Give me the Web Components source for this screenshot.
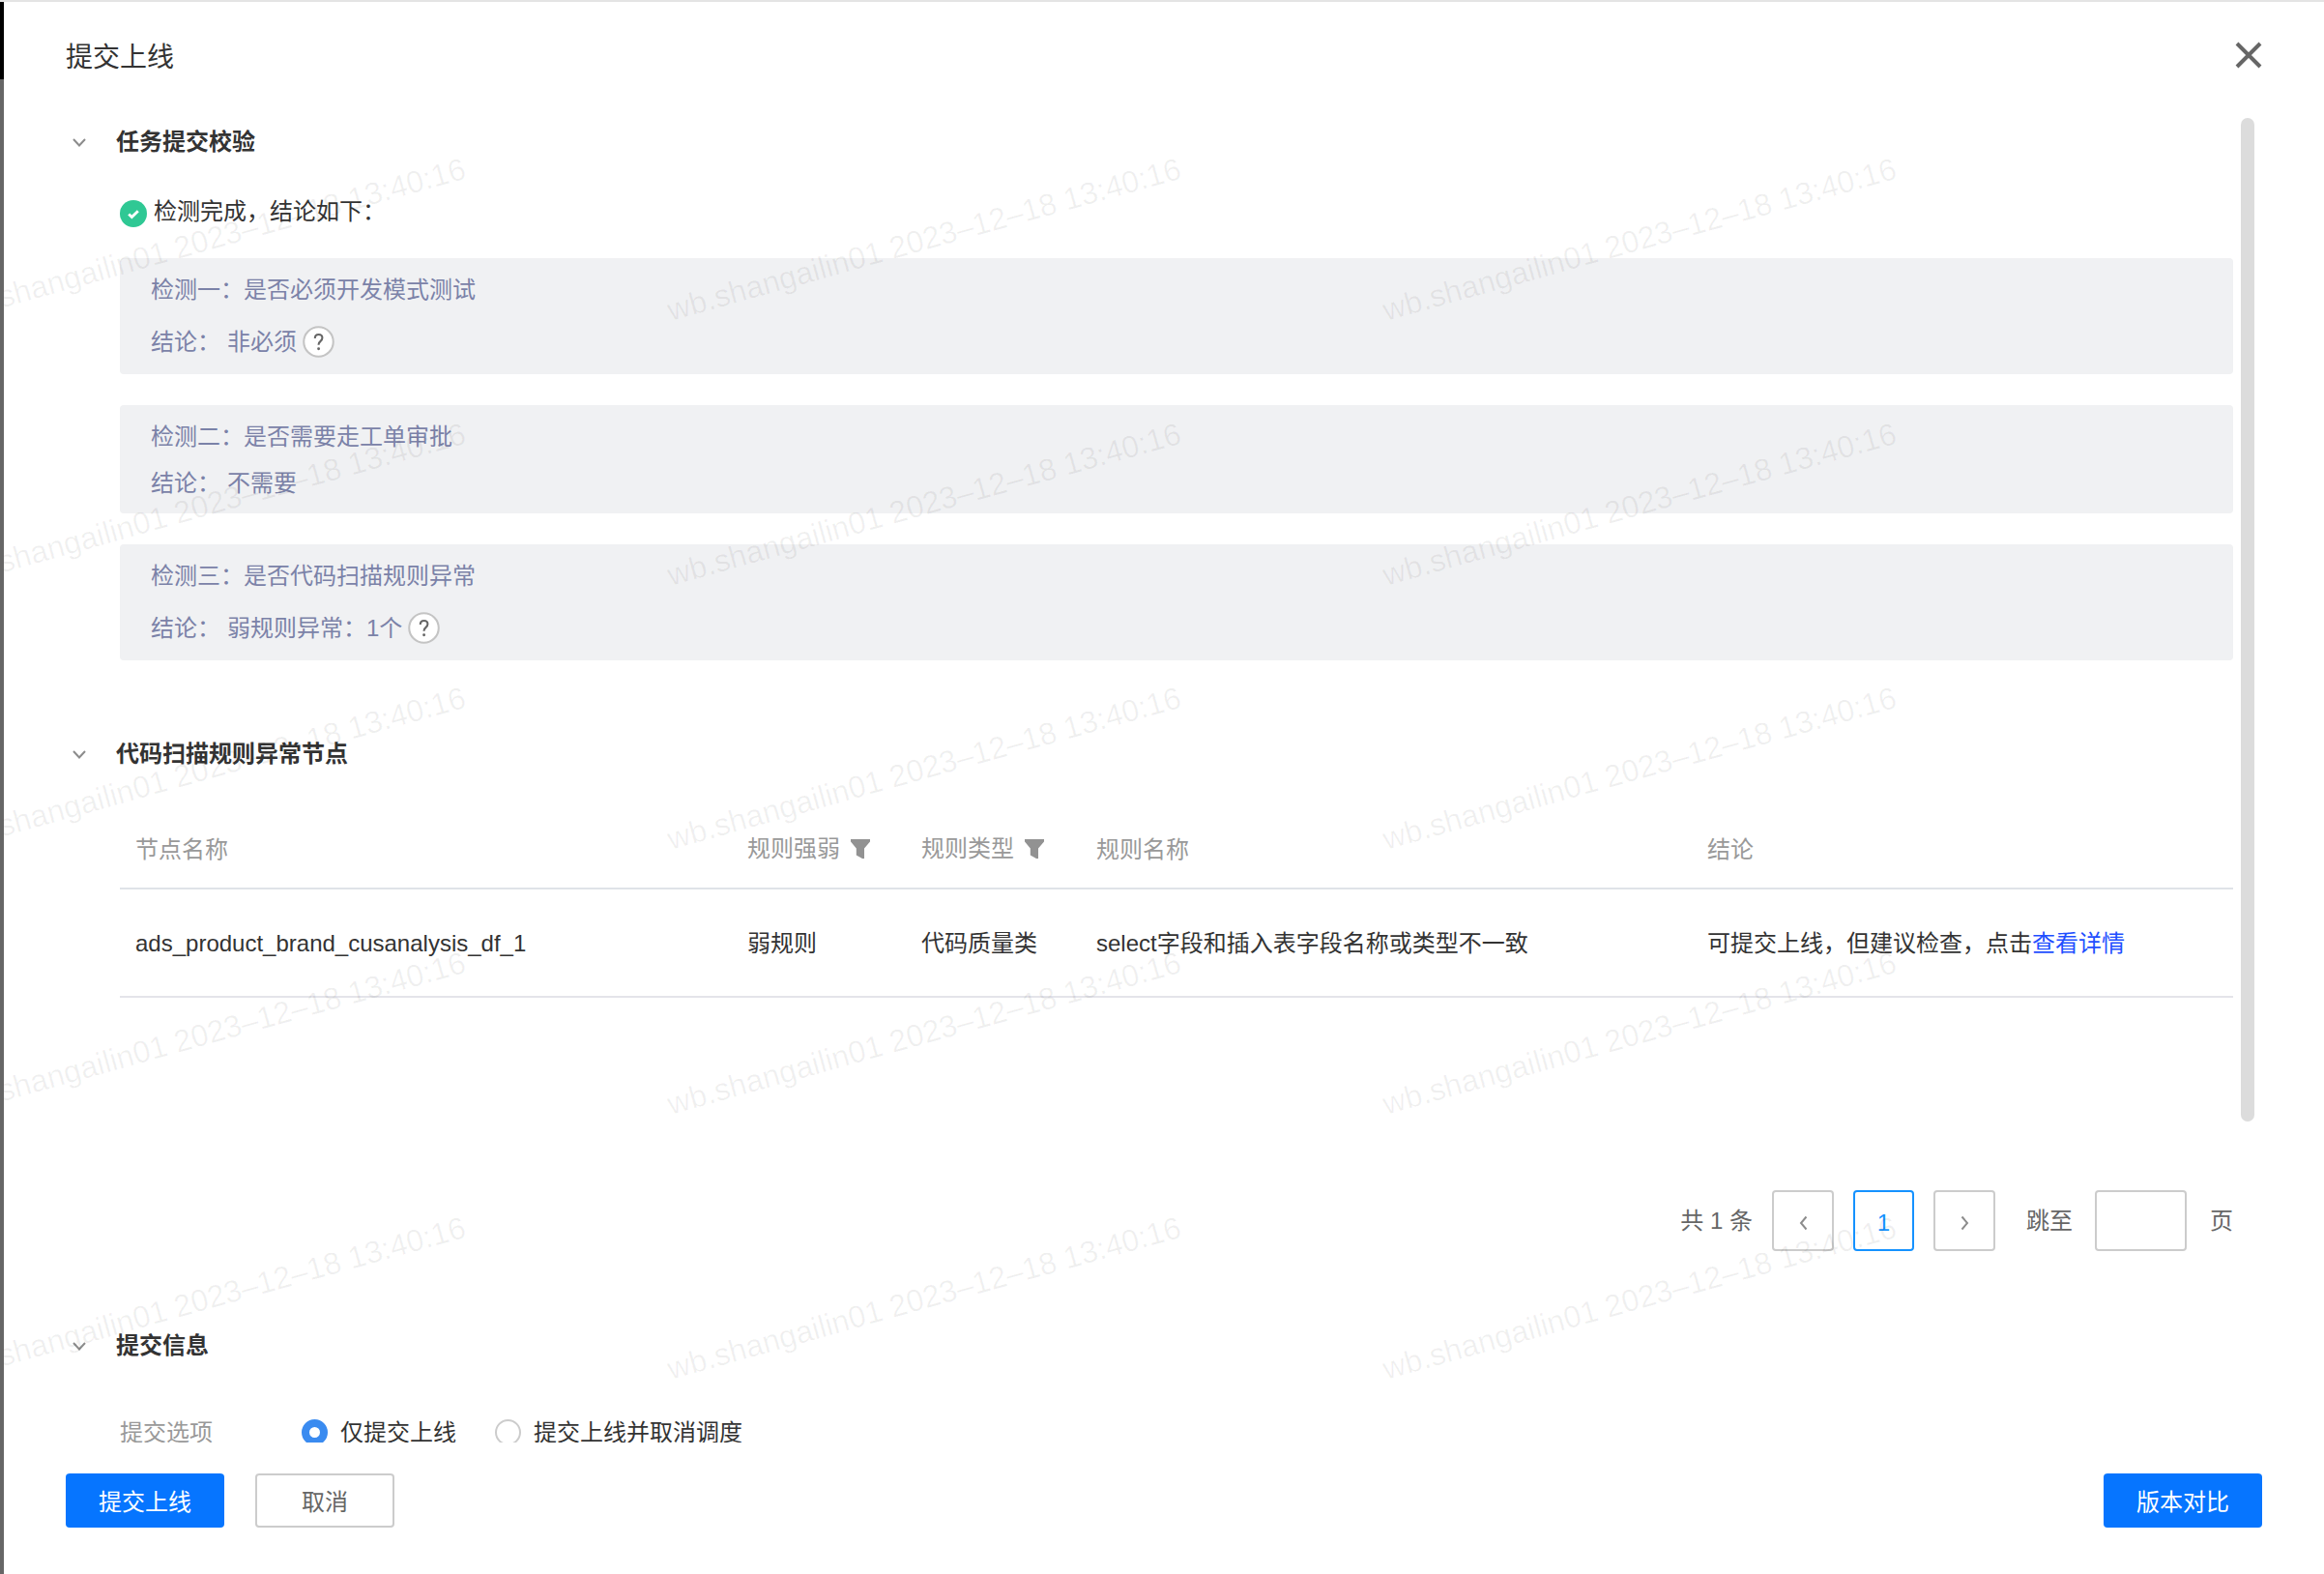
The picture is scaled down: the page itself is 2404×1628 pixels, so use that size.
<!DOCTYPE html>
<html lang="zh-CN">
<head>
<meta charset="utf-8">
<title>提交上线</title>
<style>
  html, body { margin: 0; padding: 0; background: #fff; }
  body { font: 24px/36px "Liberation Sans", "Noto Sans CJK SC", sans-serif; color: #333; }
</style>
</head>
<body>
<submit-drawer>
  <span slot="title">提交上线</span>

  <fold-section title="任务提交校验">
    <status-line>检测完成，结论如下：</status-line>
    <check-box tall head="检测一：是否必须开发模式测试" result="非必须" help></check-box>
    <check-box head="检测二：是否需要走工单审批" result="不需要"></check-box>
    <check-box tall head="检测三：是否代码扫描规则异常" result="弱规则异常：1个" help></check-box>
  </fold-section>

  <fold-section title="代码扫描规则异常节点" style="--section-top: 76px">
    <rule-table></rule-table>
    <page-nav></page-nav>
  </fold-section>

  <fold-section title="提交信息" style="--section-top: 77px">
    <submit-options></submit-options>
  </fold-section>
</submit-drawer>

<script>
class FoldSection extends HTMLElement {
    constructor() {
        super();
        this.attachShadow({mode: "open"}).innerHTML = `
            <style>
                :host { display: block; margin-top: var(--section-top, 14px); }
                .head { display: flex; align-items: center; height: 40px; padding-left: 71px; gap: 31px; font-weight: 700; color: #333; }
                svg { width: 14px; height: 9px; margin-top: 2px; }
                #title { padding-top: 1px; }
                .body { padding: 0 94px 0 120px; }
            </style>
            <div class="head">
                <svg viewBox="0 0 14 9"><path d="M1 1l6 6.5L13 1" fill="none" stroke="#8c8c8c" stroke-width="2"/></svg>
                <span id="title"></span>
            </div>
            <div class="body"><slot></slot></div>
        `;
        this.shadowRoot.getElementById("title").textContent = this.getAttribute("title");
    }
}
customElements.define("fold-section", FoldSection);

class StatusLine extends HTMLElement {
    constructor() {
        super();
        this.attachShadow({mode: "open"}).innerHTML = `
            <style>
                :host { display: flex; align-items: center; gap: 7px; height: 40px; margin: 32px 0 29px; color: #333; }
                svg { width: 28px; height: 28px; margin-top: 6px; flex: none; }
                span { padding-top: 1px; }
            </style>
            <svg viewBox="0 0 28 28">
                <circle cx="14" cy="14" r="14" fill="#2fc894"/>
                <path d="M9.2 14.4l3.2 3.2 6.4-6.4" fill="none" stroke="#fff" stroke-width="2.8"/>
            </svg>
            <span><slot></slot></span>
        `;
    }
}
customElements.define("status-line", StatusLine);

class CheckBox extends HTMLElement {
    constructor() {
        super();
        this.attachShadow({mode: "open"}).innerHTML = `
            <style>
                :host { display: block; margin-bottom: 32px; background: #f0f1f3; border-radius: 4px; padding: 14px 32px 14px; color: #7b82a8; }
                :host([tall]) { padding-bottom: 16px; }
                .row { display: flex; align-items: center; height: 36px; white-space: pre; }
                .row span { padding-top: 1px; }
                .result { margin-top: 12px; }
                :host([tall]) .result { margin-top: 18px; }
                .row .label { width: 79px; }
                svg { width: 33px; height: 33px; flex: none; }
                .help { display: none; }
                :host([help]) .help { display: block; margin-left: 6px; }
            </style>
            <div class="row"><span id="head"></span></div>
            <div class="row result">
                <span class="label">结论：</span><span id="value"></span>
                <svg class="help" viewBox="0 0 32 32">
                    <circle cx="16" cy="16" r="14.8" fill="#fff" stroke="#c4c4c4" stroke-width="2"/>
                    <path d="M12.4 12.6c0-2.4 1.5-3.8 3.7-3.8s3.7 1.4 3.7 3.4c0 1.6-.8 2.4-2 3.4-1.1.9-1.7 1.6-1.7 3v.6" fill="none" stroke="#666" stroke-width="2"/>
                    <circle cx="16.1" cy="23" r="1.4" fill="#666"/>
                </svg>
            </div>
        `;
        this.shadowRoot.getElementById("head").textContent = this.getAttribute("head");
        this.shadowRoot.getElementById("value").textContent = this.getAttribute("result");
    }
}
customElements.define("check-box", CheckBox);

const funnel = `<svg viewBox="0 0 20 20" width="20" height="20"><path d="M0 0h20v2.4L14 9.6V20h-2L5.8 16.6V9.6L0 2.4z" fill="#929292"/></svg>`;

class RuleTable extends HTMLElement {
    constructor() {
        super();
        this.attachShadow({mode: "open"}).innerHTML = `
            <style>
                :host { display: block; margin-top: 36px; }
                .row { display: grid; grid-template-columns: 633px 180px 181px 632px 1fr; padding-left: 16px; align-items: center; }
                .header { height: 83px; border-bottom: 2px solid #dfe3e8; color: #999; }
                .header > span { padding-top: 4px; }
                .data { height: 110px; border-bottom: 2px solid #e4e4ea; color: #333; }
                .data > span { padding-top: 1px; }
                .header > .filter { display: flex; align-items: center; gap: 11px; padding-top: 2px; }
                .filter svg { margin-top: 0; }
                a { color: #1f4fff; text-decoration: none; }
            </style>
            <div class="row header">
                <span>节点名称</span>
                <span class="filter">规则强弱 ${funnel}</span>
                <span class="filter">规则类型 ${funnel}</span>
                <span>规则名称</span>
                <span>结论</span>
            </div>
            <div class="row data">
                <span>ads_product_brand_cusanalysis_df_1</span>
                <span>弱规则</span>
                <span>代码质量类</span>
                <span>select字段和插入表字段名称或类型不一致</span>
                <span>可提交上线，但建议检查，点击<a href="#">查看详情</a></span>
            </div>
        `;
    }
}
customElements.define("rule-table", RuleTable);

class PageNav extends HTMLElement {
    constructor() {
        super();
        this.attachShadow({mode: "open"}).innerHTML = `
            <style>
                :host { display: flex; justify-content: flex-end; align-items: center; gap: 20px; margin-top: 199px; color: #666; }
                .btn { box-sizing: border-box; width: 64px; height: 63px; border: 2px solid #ccc; border-radius: 4px; display: flex; align-items: center; justify-content: center; }
                .on { width: 63px; border-color: #1592ff; color: #1592ff; }
                .on span { margin-top: 4px; }
                .input { width: 95px; margin-left: 3px; }
                .jump { margin-left: 12px; }
                .page { margin-left: 4px; }
                svg { width: 9px; height: 16px; margin-top: 4px; }
            </style>
            <span>共 1 条</span>
            <div class="btn"><svg viewBox="0 0 9 16"><path d="M7.5 1.5L2 8l5.5 6.5" fill="none" stroke="#8c8c8c" stroke-width="2"/></svg></div>
            <div class="btn on"><span>1</span></div>
            <div class="btn"><svg viewBox="0 0 9 16"><path d="M1.5 1.5L7 8l-5.5 6.5" fill="none" stroke="#8c8c8c" stroke-width="2"/></svg></div>
            <span class="jump">跳至</span>
            <div class="btn input"></div>
            <span class="page">页</span>
        `;
    }
}
customElements.define("page-nav", PageNav);

class SubmitOptions extends HTMLElement {
    constructor() {
        super();
        this.attachShadow({mode: "open"}).innerHTML = `
            <style>
                :host { display: flex; align-items: center; height: 40px; margin-top: 51px; color: #333; white-space: nowrap; }
                .label { width: 188px; color: #999; }
                .radio { box-sizing: border-box; width: 27px; height: 27px; border-radius: 50%; margin: -2px 13px 0 0; border: 2px solid #ccc; }
                .radio.on { border: 8px solid #3a8bf0; }
                .second { margin-left: 40px; }
            </style>
            <span class="label">提交选项</span>
            <span class="radio on"></span><span>仅提交上线</span>
            <span class="radio second"></span><span>提交上线并取消调度</span>
        `;
    }
}
customElements.define("submit-options", SubmitOptions);

class WaterMark extends HTMLElement {
    constructor() {
        super();
        let marks = "";
        for (let i = 0; i < 15; i++) {
            marks += `<span>wb.shangailin01 2023–12–18 13:40:16</span>`;
        }
        this.attachShadow({mode: "open"}).innerHTML = `
            <style>
                :host { position: absolute; left: 4px; top: 0; right: 0; bottom: 136px; overflow: hidden; pointer-events: none; }
                .grid { display: grid; grid-template-columns: repeat(3, 740px); grid-auto-rows: 273.67px; margin: 299px 0 0 -50px; }
                span { display: block; white-space: nowrap; justify-self: start; align-self: start; font: 32px/40px "Liberation Sans", sans-serif; color: rgba(0, 0, 0, .06); transform: rotate(-15.6deg); transform-origin: 0 31px; }
            </style>
            <div class="grid">${marks}</div>
        `;
    }
}
customElements.define("water-mark", WaterMark);

class SubmitDrawer extends HTMLElement {
    constructor() {
        super();
        this.attachShadow({mode: "open"}).innerHTML = `
            <style>
                :host { display: flex; position: relative; box-sizing: border-box; width: 2404px; height: 1628px; overflow: hidden; border-top: 2px solid #e4e4e4; background: #fff; }
                .edge { width: 4px; flex: none; background: linear-gradient(#000 80px, #666 80px); }
                .main { flex: 1; display: flex; flex-direction: column; min-width: 0; }
                header { display: flex; justify-content: space-between; align-items: center; height: 110px; padding: 0 64px; flex: none; font-size: 28px; color: #333; box-sizing: border-box; }
                .name { padding-top: 5px; }
                header svg { width: 28px; height: 28px; }
                .content { height: 1380px; overflow: hidden; flex: none; }
                footer { display: flex; align-items: flex-start; gap: 32px; padding: 32px 64px 0; flex: 1; }
                button { box-sizing: border-box; height: 56px; width: 164px; font: inherit; line-height: 1; border-radius: 4px; border: 0; padding: 3px 0 0; background: #0675ff; color: #fff; }
                button.ghost { width: 144px; background: #fff; border: 2px solid #ccc; color: #666; }
                button.right { margin-left: auto; }
                .bar { position: absolute; left: 2318px; top: 120px; width: 14px; height: 1038px; background: #dcdcdc; border-radius: 7px; }
            </style>
            <div class="edge"></div>
            <div class="main">
                <header>
                    <div class="name"><slot name="title"></slot></div>
                    <svg viewBox="0 0 28 28"><path d="M2 2l24 24M26 2L2 26" fill="none" stroke="#666" stroke-width="4"/></svg>
                </header>
                <div class="content"><slot></slot></div>
                <footer>
                    <button>提交上线</button>
                    <button class="ghost">取消</button>
                    <button class="right">版本对比</button>
                </footer>
            </div>
            <div class="bar"></div>
            <water-mark></water-mark>
        `;
    }
}
customElements.define("submit-drawer", SubmitDrawer);
</script>
</body>
</html>
